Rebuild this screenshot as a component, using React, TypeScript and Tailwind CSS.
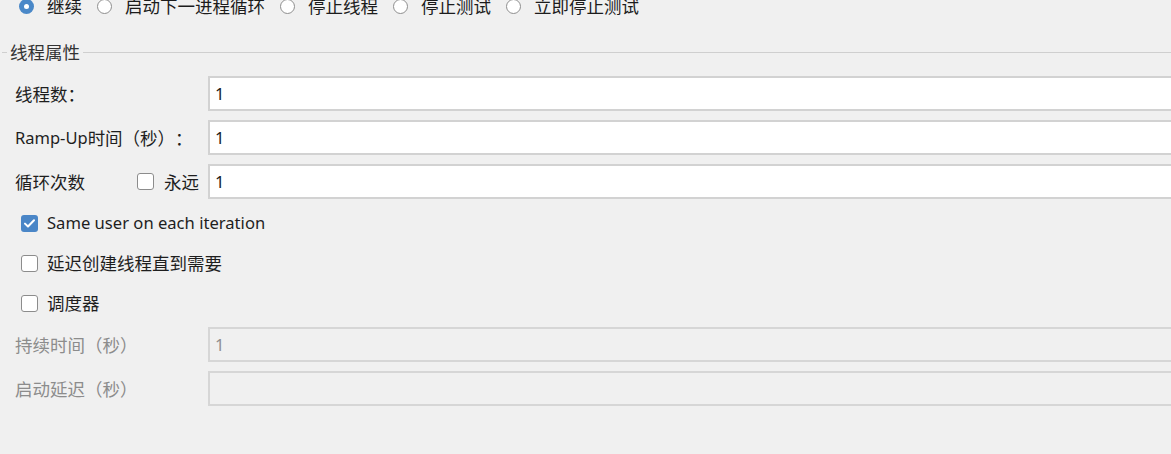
import React from 'react';

const FONT = 'font-["Segoe_UI","Noto_Sans","Noto_Sans_CJK_SC",sans-serif]';

const Radio: React.FC<{ checked?: boolean; label: string }> = ({ checked, label }) => (
  <label className="flex items-center gap-[13px]">
    {checked ? (
      <span className="flex h-[15px] w-[15px] items-center justify-center rounded-full bg-[#4a88c8]">
        <span className="h-[5px] w-[5px] rounded-full bg-white" />
      </span>
    ) : (
      <span className="h-[15px] w-[15px] rounded-full border border-[#8e8e8e] bg-white" />
    )}
    <span className="text-[#1c1c1c]">{label}</span>
  </label>
);

const Check: React.FC<{ checked?: boolean }> = ({ checked }) =>
  checked ? (
    <span className="flex h-[17px] w-[17px] items-center justify-center rounded-[3px] bg-[#4a86c7]">
      <svg width="11" height="9" viewBox="0 0 11 9" fill="none">
        <path d="M1 4.6 L4 7.5 L10 1.2" stroke="white" strokeWidth="2" strokeLinecap="round" strokeLinejoin="round" />
      </svg>
    </span>
  ) : (
    <span className="h-[17px] w-[17px] rounded-[3px] border-[1.5px] border-[#8c8c8c] bg-white" />
  );

const Field: React.FC<{ value?: string; disabled?: boolean }> = ({ value = '', disabled }) => (
  <div
    className={`flex h-[35px] items-center border-2 pl-[5px] -mr-[6px] text-[16.5px] ${
      disabled ? 'border-[#d6d6d6] bg-[#f0f0f0] text-[#8f8f8f]' : 'border-[#d2d2d2] bg-white text-[#1a1a1a]'
    }`}
  >
    {value}
  </div>
);

export default function App() {
  return (
    <div
      className={`h-[454px] w-[1171px] overflow-hidden bg-[#f0f0f0] text-[17.5px] leading-[22px] [text-spacing-trim:space-all] ${FONT}`}
    >
      {/* 线程结束后动作 */}
      <div className="-mt-[5px] flex h-[22px] items-center gap-[15px] pl-[19px]">
        <Radio checked label="继续" />
        <Radio label="启动下一进程循环" />
        <Radio label="停止线程" />
        <Radio label="停止测试" />
        <Radio label="立即停止测试" />
      </div>

      {/* 线程属性 */}
      <div className="mt-[24px] flex items-center">
        <span className="ml-[2px] h-px w-[5px] bg-[#cfcfcf]" />
        <span className="px-[3px] text-[#333]">线程属性</span>
        <span className="h-px flex-1 bg-[#cfcfcf]" />
      </div>

      <div className="mt-[13px] grid grid-cols-[193px_1fr] gap-y-[9px] pl-[15px]">
        <div className="flex items-center text-[#1e1e1e]">线程数：</div>
        <Field value="1" />
        <div className="flex items-center text-[#1e1e1e]">
          <span className="text-[16.5px]">Ramp-Up</span>时间（秒）：
        </div>
        <Field value="1" />
        <div className="flex items-center pr-[9px] text-[#1e1e1e]">
          <span>循环次数</span>
          <span className="ml-auto flex items-center gap-[10px]">
            <Check />
            <span>永远</span>
          </span>
        </div>
        <Field value="1" />
      </div>

      <div className="mt-[4px] flex flex-col pl-[21px] text-[#1e1e1e]">
        <div className="flex h-[40px] items-center gap-[9px]">
          <Check checked />
          <span className="text-[16.6px]">Same user on each iteration</span>
        </div>
        <div className="flex h-[40px] items-center gap-[9px]">
          <Check />
          <span>延迟创建线程直到需要</span>
        </div>
        <div className="flex h-[40px] items-center gap-[9px]">
          <Check />
          <span>调度器</span>
        </div>
      </div>

      <div className="mt-[4px] grid grid-cols-[193px_1fr] gap-y-[9px] pl-[15px]">
        <div className="flex items-center text-[#8c8c8c]">持续时间（秒）</div>
        <Field value="1" disabled />
        <div className="flex items-center text-[#8c8c8c]">启动延迟（秒）</div>
        <Field disabled />
      </div>
    </div>
  );
}
